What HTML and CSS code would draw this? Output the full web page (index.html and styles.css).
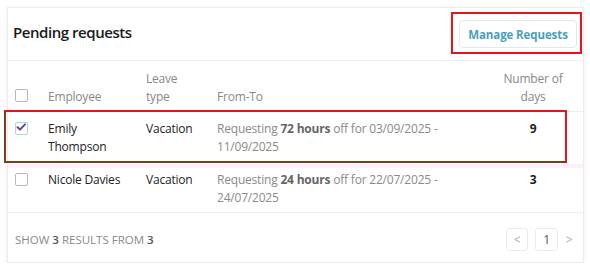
FILE: index.html
```html
<!DOCTYPE html>
<html>
<head>
<meta charset="utf-8">
<link rel="stylesheet" href="styles.css">
</head>
<body>
<div class="card">
  <div class="card-head">
    <h2 class="title">Pending requests</h2>
    <div class="btn-wrap"><button class="btn">Manage Requests</button></div>
  </div>
  <table class="tbl">
    <colgroup>
      <col class="c-check"><col class="c-emp"><col class="c-type"><col class="c-range"><col class="c-days">
    </colgroup>
    <thead>
      <tr class="hrow">
        <th class="cb-cell"><span class="cb"></span></th>
        <th>Employee</th>
        <th>Leave<br>type</th>
        <th>From-To</th>
        <th class="num">Number of<br>days</th>
      </tr>
    </thead>
    <tbody>
      <tr class="sel">
        <td class="cb-cell"><span class="cb checked"><svg viewBox="0 0 12 12" width="12" height="12"><path d="M2.5 6.3 L5 8.6 L10 3.4" fill="none" stroke="#6a3fa0" stroke-width="2" stroke-linecap="round" stroke-linejoin="round"/></svg></span></td>
        <td>Emily<br>Thompson</td>
        <td>Vacation</td>
        <td class="muted">Requesting <b>72 hours</b> off for 03/09/2025 -<br>11/09/2025</td>
        <td class="num strong">9</td>
      </tr>
      <tr class="row2">
        <td class="cb-cell"><span class="cb"></span></td>
        <td>Nicole Davies</td>
        <td>Vacation</td>
        <td class="muted">Requesting <b>24 hours</b> off for 22/07/2025 -<br>24/07/2025</td>
        <td class="num strong">3</td>
      </tr>
    </tbody>
  </table>
  <div class="card-foot">
    <div class="summary">SHOW <b>3</b> RESULTS FROM <b>3</b></div>
    <div class="pager">
      <span class="pg pg-box">&lt;</span>
      <span class="pg pg-box cur">1</span>
      <span class="pg pg-next">&gt;</span>
    </div>
  </div>
  <div class="mark-row"></div>
</div>
</body>
</html>
```
FILE: styles.css
```css
* { box-sizing: border-box; }
body {
  margin: 0;
  background: #fff;
  font-family: "Open Sans", "Noto Sans", sans-serif;
  color: #222;
  font-size: 12px;
  letter-spacing: -0.2px;
}
.card {
  position: relative;
  margin: 7px 7px 0 7px;
  width: 577px;
  height: 256px;
  background: #fff;
  border: 1px solid #ececec;
  box-shadow: 0 1px 4px rgba(0,0,0,0.07);
  display: flex;
  flex-direction: column;
}
.card-head {
  height: 53px;
  flex: none;
  display: flex;
  align-items: flex-start;
  justify-content: space-between;
  padding: 4px 1px 0 5px;
  border-bottom: 1px solid #eee;
}
.title {
  margin: 0;
  font-size: 15px;
  font-weight: 600;
  letter-spacing: -0.45px;
  color: #1a1a1a;
  line-height: 22px;
  padding-top: 9px;
}
.btn-wrap {
  border: 2px solid #e8131b;
  padding: 6px 3px 4px 6px;
}
.btn {
  font-family: inherit;
  background: #fff;
  border: 1px solid #e4e8ea;
  border-radius: 4px;
  color: #4aa0bd;
  font-weight: 700;
  font-size: 11.5px;
  letter-spacing: -0.1px;
  height: 28px;
  width: 118px;
  padding: 0;
  display: block;
}
.tbl {
  width: 100%;
  border-collapse: collapse;
  table-layout: fixed;
}
.c-check { width: 40px; }
.c-emp { width: 98px; }
.c-type { width: 71px; }
.c-range { width: 270px; }
.hrow { height: 50px; }
.tbl th {
  font-weight: 400;
  color: #888;
  text-align: left;
  vertical-align: bottom;
  line-height: 18px;
  padding: 0 0 5px 0;
  border-bottom: 1px solid #eee;
}
.tbl td {
  vertical-align: top;
  line-height: 18px;
  color: #222;
}
.sel { height: 55px; }
.sel td { padding: 8px 0 0 0; border-bottom: 4px solid #fdf0fa; }
.row2 { height: 46px; }
.row2 td { padding: 3px 0 0 0; }
.tbl th.num, .tbl td.num { text-align: center; padding-right: 4px; }
.tbl .cb-cell { padding-left: 7px; }
.cb {
  display: inline-block;
  width: 13px;
  height: 13px;
  border: 1px solid #b8b8b8;
  border-radius: 2px;
  background: #fff;
  position: relative;
}
th .cb { margin-bottom: -1px; }
td .cb { margin-top: 2px; }
.cb.checked { border-color: #a8d8cf; }
.cb svg { position: absolute; left: -1px; top: -2px; }
.muted { color: #8a8a8a !important; }
.muted b { color: #666; font-weight: 700; }
.strong { font-weight: 700; }
.card-foot {
  margin-top: auto;
  height: 50px;
  flex: none;
  border-top: 1px solid #eee;
  display: flex;
  align-items: center;
  justify-content: space-between;
  padding: 3px 10px 0 7px;
}
.summary { color: #888; font-size: 11.5px; letter-spacing: 0; }
.summary b { color: #555; font-weight: 600; }
.pager { display: flex; align-items: center; gap: 7px; }
.pg {
  font-size: 12px;
  color: #aaa;
  width: 22px;
  height: 23px;
  display: flex;
  align-items: center;
  justify-content: center;
}
.pg-box { border: 1px solid #ebebeb; border-radius: 3px; }
.pg-box.cur { width: 23px; color: #555; }
.pg-next { width: 8px; }
.mark-row {
  position: absolute;
  left: -4px;
  top: 102px;
  width: 563px;
  height: 53px;
  border: 2px solid #e8131b;
  border-left-color: #7a3d1c;
  border-bottom-color: #7a3d1c;
  pointer-events: none;
}
```
